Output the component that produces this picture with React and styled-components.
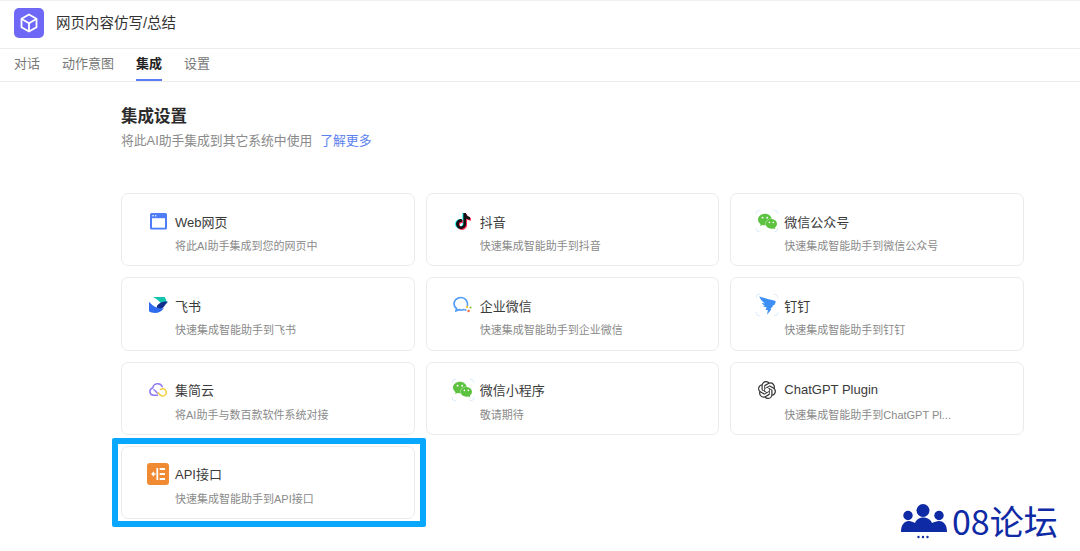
import React from "react";
import styled, { createGlobalStyle } from "styled-components";
import { SiOpenai, SiTiktok, SiWechat } from "react-icons/si";

const Global = createGlobalStyle`
  html, body { margin: 0; padding: 0; background: #fff; }
  body { width: 1080px; height: 551px; overflow: hidden; font-family: "Liberation Sans", "Noto Sans CJK SC", sans-serif; }
`;

const Page = styled.div`
  position: relative;
  width: 1080px;
  height: 551px;
  border-top: 1px solid #f0f0f0;
  box-sizing: border-box;
`;
const TitleBar = styled.header`
  display: flex;
  align-items: flex-start;
  gap: 12px;
  height: 40px;
  padding: 7px 14px 0;
  border-bottom: 1px solid #ececec;
`;
const Logo = styled.div`
  width: 30px;
  height: 30px;
  border-radius: 5px;
  background: #6f68f6;
  display: flex;
  align-items: center;
  justify-content: center;
`;
const AppName = styled.h1`
  margin: 0;
  font-size: 14.5px;
  line-height: 30px;
  font-weight: 400;
  color: #333;
`;
const Tabs = styled.nav`
  display: flex;
  gap: 22px;
  height: 32px;
  padding: 0 14px;
  border-bottom: 1px solid #ececec;
`;
const Tab = styled.a`
  display: flex;
  align-items: center;
  height: 32px;
  margin-bottom: -1px;
  padding-bottom: 3px;
  box-sizing: border-box;
  font-size: 13px;
  color: ${(p) => (p.$active ? "#222" : "#777")};
  font-weight: ${(p) => (p.$active ? 700 : 400)};
  border-bottom: 2px solid ${(p) => (p.$active ? "#5b7cf5" : "transparent")};
`;
const Main = styled.main`
  padding: 23px 56px 0 121px;
`;
const Heading = styled.h2`
  margin: 0;
  font-size: 16.5px;
  line-height: 22px;
  font-weight: 700;
  color: #2b2b2b;
`;
const Subtitle = styled.p`
  margin: 4px 0 0;
  font-size: 12.8px;
  line-height: 20px;
  color: #8a8a8a;
  display: flex;
  gap: 8px;
`;
const MoreLink = styled.a`
  color: #5b82f0;
`;
const Grid = styled.div`
  display: grid;
  grid-template-columns: repeat(3, 1fr);
  grid-auto-rows: 73.33px;
  gap: 11px;
  margin-top: 42px;
`;
const Card = styled.article`
  position: relative;
  box-sizing: border-box;
  border: 1px solid #ebebeb;
  border-radius: 7px;
  padding: 15px 14px 0 24px;
  display: grid;
  grid-template-columns: 24px 1fr;
  column-gap: 5px;
  grid-template-rows: 24px 20px;
  row-gap: 2px;
  align-items: center;
`;
const IconBox = styled.div`
  width: 24px;
  height: 24px;
  display: flex;
  align-items: center;
  justify-content: center;
`;
const CardTitle = styled.h3`
  margin: 0;
  font-size: 13px;
  font-weight: 400;
  color: #3a3a3a;
`;
const CardDesc = styled.p`
  grid-column: 2;
  margin: 0;
  font-size: 11px;
  color: #8a8a8a;
  white-space: nowrap;
`;
const Highlight = styled.div`
  position: absolute;
  inset: -9px -12px -9px -10px;
  border: 6px solid #0aa7ff;
  border-radius: 2px;
  pointer-events: none;
`;
const Watermark = styled.div`
  position: absolute;
  left: 901px;
  top: 499px;
  display: flex;
  align-items: center;
  gap: 5px;
  color: #0f2aa5;
  font-size: 34px;
  line-height: 42px;
  font-family: "Noto Sans CJK SC", sans-serif;
`;
const IconStack = styled.div`
  position: relative;
  width: 24px;
  height: 24px;
  & > svg { position: absolute; }
`;
const CornerBox = styled.div`
  position: relative;
  width: 24px;
  height: 24px;
  display: flex;
  align-items: center;
  justify-content: center;
  & > svg:first-child { position: absolute; inset: 0; }
`;

const CubeIcon = () => (
  <svg width="20" height="20" viewBox="0 0 20 20" fill="none" stroke="#fff" strokeWidth="1.8" strokeLinejoin="round">
    <path d="M10 1.5 17.5 5.8v8.4L10 18.5 2.5 14.2V5.8Z" />
    <path d="M2.8 6 10 10.2 17.2 6M10 10.2v8" />
  </svg>
);
const WebIcon = () => (
  <svg width="17" height="17" viewBox="0 0 17 17">
    <rect x="0" y="0" width="17" height="16.5" rx="1.5" fill="#4f7cf7" />
    <rect x="2" y="5.2" width="13" height="9.5" fill="#fff" />
    <circle cx="3" cy="2.700" r=".8" fill="#fff" />
    <circle cx="5.600" cy="2.700" r=".8" fill="#fff" />
  </svg>
);
const TiktokIcon = () => (
  <IconStack>
    <SiTiktok size={16} color="#25f4ee" style={{ left: 3, top: 3.5 }} />
    <SiTiktok size={16} color="#fe2c55" style={{ left: 5, top: 4.5 }} />
    <SiTiktok size={16} color="#111" style={{ left: 4, top: 4 }} />
  </IconStack>
);
const FeishuIcon = () => (
  <svg width="19" height="16" viewBox="0 0 56 47">
    <path d="M12 0H46C50 6 52 12 52 18L40 26C34 14 24 6 12 0Z" fill="#12c4ac" />
    <path d="M24 25C33 15 44 11 56 14 50 18 48 24 44 29 38 36 30 38 22 36Z" fill="#0f2f8e" />
    <path d="M0 14C10 26 26 36 44 33 38 42 28 47 18 47 10 47 4 45 0 42Z" fill="#2f6bf0" />
  </svg>
);
const WecomIcon = () => (
  <svg width="20" height="18" viewBox="0 0 20 18" fill="none">
    <path d="M14.500 9.500C15 5 12 1.500 8 1.500 4 1.500 1 4.300 1 7.700c0 2 1 3.600 2.500 4.800l-.5 2.400 3-1.300c1.500.5 3.500.5 5-.2" stroke="#4f9bf5" strokeWidth="1.700" strokeLinecap="round" />
    <circle cx="14" cy="11" r="1.300" fill="#f7c845" />
    <circle cx="17.500" cy="11.500" r="1.100" fill="#8ac53f" />
    <circle cx="15.600" cy="15" r="1.200" fill="#ef6b4a" />
    <circle cx="12.500" cy="14" r="1" fill="#4f9bf5" />
  </svg>
);
const Corners = () => (
  <svg width="24" height="24" viewBox="0 0 24 24" fill="none" stroke="#dcecfb" strokeWidth="1">
    <path d="M1 5Q1 1 5 1M19 1Q23 1 23 5M23 19Q23 23 19 23M5 23Q1 23 1 19" />
  </svg>
);
const WechatIcon = () => (
  <CornerBox>
    <Corners />
    <SiWechat size={19} color="#5cc23f" />
  </CornerBox>
);
const DingIcon = () => (
  <CornerBox>
    <Corners />
    <svg width="17" height="19" viewBox="0 0 17 19">
      <path d="M.3.300C5 2.300 11 3.500 16.500 5c.4 1-.3 2.400-1.300 4l-2.300.2 1.700.4-3.400 3.400 1.200.2-4.300 5.500.8-4.700H6.500l1.200-2.600C5.400 11 4.500 10.500 3.300 9.800l3 .2C4.500 9 3.200 8 2.500 7l3.400.4C3.600 6 1.300 3.500.3.300Z" fill="#3d8ff5" />
    </svg>
  </CornerBox>
);
const JijianIcon = () => (
  <svg width="19" height="15" viewBox="0 0 19 15" fill="none" strokeWidth="1.500" strokeLinecap="round">
    <path d="M8.500 13.200H4.500A3.700 3.700 0 0 1 3.800 5.900 5 5 0 0 1 13.300 4.700" stroke="#8e7bf2" />
    <path d="M5 7.800 9 11.500" stroke="#8e7bf2" />
    <path d="M9 10.800 10.800 12.500A3.600 3.600 0 1 0 11.500 7.500" stroke="#f5cf3e" />
  </svg>
);
const ApiIcon = () => (
  <svg width="22" height="22" viewBox="0 0 22 22">
    <rect width="22" height="22" rx="3" fill="#f08a33" />
    <path d="M10.300 5V17M12.700 6H18M12.700 11H18M12.700 16H18" stroke="#fff" strokeWidth="1.800" fill="none" />
    <path d="M8.500 11H5M7 9 5 11 7 13" stroke="#fff" strokeWidth="1.300" fill="none" />
  </svg>
);
const PeopleIcon = () => (
  <svg width="46" height="36" viewBox="0 0 46 36" fill="#0f2aa5">
    <circle cx="22" cy="7.500" r="6.500" />
    <circle cx="7" cy="12.500" r="4.700" />
    <circle cx="38" cy="12.500" r="4.700" />
    <path d="M0 29C0 22 3 18 8 18 10 18 12 19 14 20 15 17 18 14.500 22 14.500 27 14.500 30 17 31 20 33 19 36 18 38 18 43 18 46 22 46 29Z" />
    <circle cx="17.500" cy="34" r="1.200" /><circle cx="22" cy="34" r="1.200" /><circle cx="26.500" cy="34" r="1.200" />
  </svg>
);

const cards = [
  { title: "Web网页", desc: "将此AI助手集成到您的网页中", icon: <WebIcon /> },
  { title: "抖音", desc: "快速集成智能助手到抖音", icon: <TiktokIcon /> },
  { title: "微信公众号", desc: "快速集成智能助手到微信公众号", icon: <WechatIcon /> },
  { title: "飞书", desc: "快速集成智能助手到飞书", icon: <FeishuIcon /> },
  { title: "企业微信", desc: "快速集成智能助手到企业微信", icon: <WecomIcon /> },
  { title: "钉钉", desc: "快速集成智能助手到钉钉", icon: <DingIcon /> },
  { title: "集简云", desc: "将AI助手与数百款软件系统对接", icon: <JijianIcon /> },
  { title: "微信小程序", desc: "敬请期待", icon: <WechatIcon /> },
  { title: "ChatGPT Plugin", desc: "快速集成智能助手到ChatGPT Pl...", icon: <SiOpenai size={18} color="#333" /> },
  { title: "API接口", desc: "快速集成智能助手到API接口", icon: <ApiIcon />, highlighted: true },
];

export default function App() {
  return (
    <Page>
      <Global />
      <TitleBar>
        <Logo><CubeIcon /></Logo>
        <AppName>网页内容仿写/总结</AppName>
      </TitleBar>
      <Tabs>
        <Tab>对话</Tab>
        <Tab>动作意图</Tab>
        <Tab $active>集成</Tab>
        <Tab>设置</Tab>
      </Tabs>
      <Main>
        <Heading>集成设置</Heading>
        <Subtitle>
          将此AI助手集成到其它系统中使用
          <MoreLink>了解更多</MoreLink>
        </Subtitle>
        <Grid>
          {cards.map((c) => (
            <Card key={c.title}>
              <IconBox>{c.icon}</IconBox>
              <CardTitle>{c.title}</CardTitle>
              <CardDesc>{c.desc}</CardDesc>
              {c.highlighted && <Highlight />}
            </Card>
          ))}
        </Grid>
      </Main>
      <Watermark>
        <PeopleIcon />
        <span>08论坛</span>
      </Watermark>
    </Page>
  );
}
